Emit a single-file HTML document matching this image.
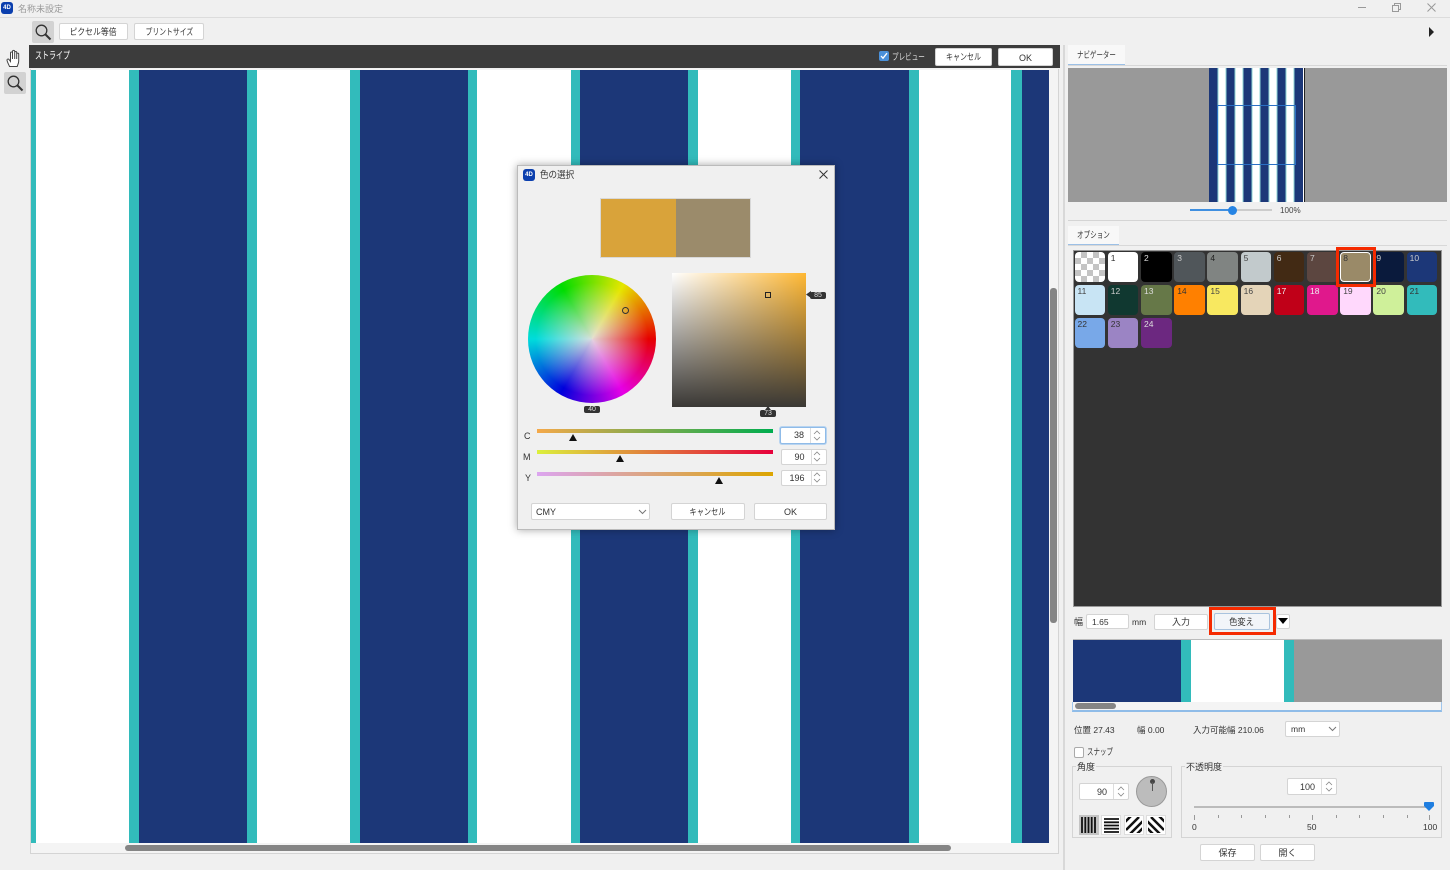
<!DOCTYPE html>
<html lang="ja"><head><meta charset="utf-8"><title>名称未設定</title>
<style>
html,body{margin:0;padding:0;width:1450px;height:870px;overflow:hidden;background:#f0f0f0}
body{position:relative;font-family:"Liberation Sans","Noto Sans CJK JP",sans-serif;font-size:9px;color:#333;filter:blur(.3px)}
div,span,svg{position:absolute;box-sizing:border-box}
.t{white-space:nowrap;line-height:12px;height:12px}
.l{transform-origin:0 50%}
.k{position:static;display:inline-block}
.b{background:#fff;border:1px solid #d4d4d4;border-radius:2px;text-align:center;white-space:nowrap;color:#333}
.s{width:30.5px;height:30px;border-radius:4px;font-size:8.5px;line-height:11px;padding:1px 0 0 3px}
.tick{width:1px;height:2.5px;background:#999;top:815px}
.arr{right:0;top:0;bottom:0;width:15px;border-left:1px solid #ddd}
</style></head><body>

<!-- title bar -->
<div style="left:0;top:17px;width:1450px;height:1px;background:#dcdcdc"></div>
<div style="left:1px;top:2px;width:12px;height:12px;border-radius:3px;background:#0b3fae"></div>
<div class="t" style="left:2px;top:2px;width:10px;text-align:center;font-size:6px;color:#fff;font-weight:bold">4D</div>
<div class="t" style="left:18px;top:3px;font-size:9px;color:#999">名称未設定</div>
<div style="left:1358px;top:7px;width:8px;height:1px;background:#999"></div>
<svg style="left:1392px;top:3px" width="9" height="9" viewBox="0 0 9 9" fill="none" stroke="#999"><path d="M.5 2.500h6v6h-6zM2.500 2.500v-2h6v6h-2"/></svg>
<svg style="left:1427px;top:3px" width="9" height="9" viewBox="0 0 9 9" fill="none" stroke="#999"><path d="M.5.5l8 8M8.500.5l-8 8"/></svg>

<!-- toolbar -->
<div style="left:32px;top:21px;width:22px;height:22px;background:#d2d2d2;border-radius:2px"></div>
<svg style="left:34px;top:23px" width="18" height="18" viewBox="0 0 18 18" fill="none" stroke="#333"><circle cx="7.500" cy="7.500" r="5.300" stroke-width="1.300"/><path d="M11.500 11.500l5 5" stroke-width="2"/></svg>
<div class="b" style="left:59px;top:23px;width:69px;height:17px;line-height:16px;font-size:9px"><span class="k" style="transform:scaleX(.87)">ピクセル等倍</span></div>
<div class="b" style="left:134px;top:23px;width:70px;height:17px;line-height:16px;font-size:9px"><span class="k" style="transform:scaleX(.76)">プリントサイズ</span></div>
<svg style="left:1428px;top:26px" width="7" height="12" viewBox="0 0 7 12"><path d="M1 1l5 5-5 5z" fill="#222"/></svg>

<!-- left tools -->
<svg style="left:6px;top:49px" width="17" height="19" viewBox="0 0 17 19" fill="#fff" stroke="#444" stroke-width="1"><path d="M3.500 17.500C2.500 15 1 12.500 1 11c0-1 1.300-1.300 2-.5l1.500 2V4c0-1.300 2-1.300 2 0V2.500c0-1.500 2.200-1.500 2.200 0V3.500c0-1.300 2-1.300 2 0V5c0-1.200 2-1.200 2 0v7c0 2.500-1 3.500-1.500 5.500zM6.500 4v6M8.700 3.500V10M10.700 4V10"/></svg>
<div style="left:4px;top:72px;width:22px;height:22px;background:#d2d2d2;border-radius:2px"></div>
<svg style="left:6px;top:74px" width="18" height="18" viewBox="0 0 18 18" fill="none" stroke="#333"><circle cx="7.500" cy="7.500" r="5.300" stroke-width="1.300"/><path d="M11.500 11.500l5 5" stroke-width="2"/></svg>

<!-- editor header -->
<div style="left:29px;top:45px;width:1031px;height:23px;background:#3c3c3c"></div>
<div class="t l" style="left:35px;top:51px;color:#fff;font-size:10px;transform:scaleX(.7)">ストライプ</div>
<div style="left:879px;top:51px;width:10px;height:10px;background:#4a90d9;border-radius:2px"></div>
<svg style="left:880px;top:52px" width="8" height="8" viewBox="0 0 8 8" fill="none" stroke="#fff" stroke-width="1.300"><path d="M1 4l2 2.200L7 1.200"/></svg>
<div class="t l" style="left:892px;top:51px;color:#ddd;font-size:9px;transform:scaleX(.73)">プレビュー</div>
<div class="b" style="left:935px;top:48px;width:57px;height:18px;line-height:17px;font-size:9px"><span class="k" style="transform:scaleX(.78)">キャンセル</span></div>
<div class="b" style="left:998px;top:48px;width:55px;height:18px;line-height:18px;font-size:9px">OK</div>

<!-- canvas -->
<div style="left:30px;top:69px;width:1029px;height:785px;border:1px solid #d4d4d4;border-top:0;background:#f4f4f4"></div>
<div style="left:31px;top:70px;width:1018px;height:773px;background:linear-gradient(to right,#32bbbb 0 5px,#fff 5px 98px,#32bbbb 98px 108px,#1c3778 108px 216px,#32bbbb 216px 226px,#fff 226px 319px,#32bbbb 319px 329px,#1c3778 329px 437px,#32bbbb 437px 446px,#fff 446px 540px,#32bbbb 540px 549px,#1c3778 549px 657px,#32bbbb 657px 667px,#fff 667px 760px,#32bbbb 760px 769px,#1c3778 769px 878px,#32bbbb 878px 888px,#fff 888px 980px,#32bbbb 980px 991px,#1c3778 991px 1018px)"></div>
<div style="left:125px;top:845px;width:826px;height:6px;background:#858585;border-radius:3px"></div>
<div style="left:1050px;top:288px;width:7px;height:335px;background:#858585;border-radius:3px"></div>

<!-- divider -->
<div style="left:1063px;top:45px;width:2px;height:825px;background:#d8d8d8"></div>

<!-- navigator -->
<div style="left:1068px;top:45px;width:57px;height:20px;background:#f8f8f8;border-bottom:1px solid #9cc0e6"></div>
<div class="t l" style="left:1077px;top:49px;font-size:9px;transform:scaleX(.72)">ナビゲーター</div>
<div style="left:1068px;top:65px;width:379px;height:1px;background:#d8d8d8"></div>
<div style="left:1068px;top:68px;width:379px;height:134px;background:#999"></div>
<div style="left:1209px;top:68px;width:96px;height:134px;background:linear-gradient(to right,#1c3778 0 8.500px,#8ed6d6 8.500px 9.500px,#fff 9.500px 16.500px,#8ed6d6 16.500px 17.500px,#1c3778 17.500px 25.500px,#8ed6d6 25.500px 26.500px,#fff 26.500px 33.500px,#8ed6d6 33.500px 34.500px,#1c3778 34.500px 42.500px,#8ed6d6 42.500px 43.500px,#fff 43.500px 50.500px,#8ed6d6 50.500px 51.500px,#1c3778 51.500px 59.500px,#8ed6d6 59.500px 60.500px,#fff 60.500px 67.500px,#8ed6d6 67.500px 68.500px,#1c3778 68.500px 76.500px,#8ed6d6 76.500px 77.500px,#fff 77.500px 84.500px,#8ed6d6 84.500px 85.500px,#1c3778 85.500px 94px,#fff 94px 95px,#222 95px 96px)"></div>
<div style="left:1217px;top:105px;width:79px;height:60px;border:1.300px solid #2a70c4"></div>
<div style="left:1190px;top:209px;width:82px;height:2px;background:#ccc"></div>
<div style="left:1190px;top:209px;width:42px;height:2px;background:#3f8fe0"></div>
<div style="left:1228px;top:206px;width:9px;height:9px;border-radius:50%;background:#2684e4"></div>
<div class="t l" style="left:1280px;top:204px;font-size:8.500px;color:#444;transform:scaleX(.95)">100%</div>

<!-- options -->
<div style="left:1068px;top:220px;width:379px;height:1px;background:#d4d4d4"></div>
<div style="left:1068px;top:226px;width:51px;height:19px;background:#f8f8f8;border-bottom:1px solid #9cc0e6"></div>
<div class="t l" style="left:1077px;top:229px;font-size:9px;transform:scaleX(.73)">オプション</div>
<div style="left:1068px;top:245px;width:379px;height:1px;background:#d8d8d8"></div>
<div style="left:1073px;top:250px;width:369px;height:357px;background:#333;border:1px solid #999"></div>

<div class="s" style="left:1074.500px;top:251.500px;background:conic-gradient(#c4c4c4 25%,#fff 25% 50%,#c4c4c4 50% 75%,#fff 75%) 0 0/12px 12px"></div>
<div class="s" style="left:1107.800px;top:251.500px;background:#fff;color:#333">1</div>
<div class="s" style="left:1141px;top:251.500px;background:#000;color:#ddd">2</div>
<div class="s" style="left:1174.200px;top:251.500px;background:#50565a;color:#ccc">3</div>
<div class="s" style="left:1207.400px;top:251.500px;background:#808482;color:#222">4</div>
<div class="s" style="left:1240.600px;top:251.500px;background:#c2cacc;color:#444">5</div>
<div class="s" style="left:1273.800px;top:251.500px;background:#422a14;color:#ccc">6</div>
<div class="s" style="left:1307px;top:251.500px;background:#5c4640;color:#ccc">7</div>
<div class="s" style="left:1340.200px;top:251.500px;background:#9a8a68;color:#333;border:1px solid #fff;padding:0 0 0 2px">8</div>
<div class="s" style="left:1373.400px;top:251.500px;background:#0a1a3c;color:#ccc">9</div>
<div class="s" style="left:1406.600px;top:251.500px;background:#1c3778;color:#ccc">10</div>

<div class="s" style="left:1074.500px;top:285px;background:#c8e4f4;color:#444">11</div>
<div class="s" style="left:1107.800px;top:285px;background:#103830;color:#ccc">12</div>
<div class="s" style="left:1141px;top:285px;background:#667848;color:#ddd">13</div>
<div class="s" style="left:1174.200px;top:285px;background:#ff8000;color:#333">14</div>
<div class="s" style="left:1207.400px;top:285px;background:#f8e860;color:#444">15</div>
<div class="s" style="left:1240.600px;top:285px;background:#e4d4b8;color:#444">16</div>
<div class="s" style="left:1273.800px;top:285px;background:#c00018;color:#eee">17</div>
<div class="s" style="left:1307px;top:285px;background:#e0188c;color:#eee">18</div>
<div class="s" style="left:1340.200px;top:285px;background:#ffd8fc;color:#444">19</div>
<div class="s" style="left:1373.400px;top:285px;background:#cff09a;color:#444">20</div>
<div class="s" style="left:1406.600px;top:285px;background:#32bbbb;color:#333">21</div>

<div class="s" style="left:1074.500px;top:318px;background:#78a8e8;color:#333">22</div>
<div class="s" style="left:1107.800px;top:318px;background:#9b84c4;color:#333">23</div>
<div class="s" style="left:1141px;top:318px;background:#6c2880;color:#ddd">24</div>

<div style="left:1336px;top:247px;width:40px;height:40px;border:3px solid #f52a00"></div>

<!-- width row -->
<div class="t" style="left:1074px;top:616px;font-size:9px">幅</div>
<div class="b" style="left:1086px;top:614px;width:43px;height:15px;line-height:14px;text-align:left;padding-left:5px;font-size:8.500px">1.65</div>
<div class="t" style="left:1132px;top:616px;font-size:8.500px">mm</div>
<div class="b" style="left:1154px;top:614px;width:54px;height:16px;line-height:15px;font-size:9px">入力</div>
<div style="left:1209px;top:607px;width:67px;height:28px;border:3px solid #f52a00"></div>
<div class="b" style="left:1214px;top:613px;width:56px;height:17px;line-height:16px;font-size:9px;background:#f2f5f9;border-color:#a9c3de"><span class="k" style="transform:scaleX(.92)">色変え</span></div>
<div class="b" style="left:1276px;top:614px;width:14px;height:15px"></div>
<svg style="left:1278px;top:618px" width="10" height="7" viewBox="0 0 10 7"><path d="M0 0h10L5 6z" fill="#000"/></svg>

<!-- strip preview -->
<div style="left:1073px;top:639px;width:369px;height:63px;background:linear-gradient(to right,#1c3778 0 108px,#32bbbb 108px 118px,#fff 118px 211px,#32bbbb 211px 221px,#999 221px);border-top:1px solid #bbb"></div>
<div style="left:1072px;top:702px;width:370px;height:10px;background:#f4f4f4;border:1px solid #a0c6ec;border-top:0;border-bottom:2px solid #8fbce8"></div>
<div style="left:1075px;top:703px;width:41px;height:6px;background:#858585;border-radius:3px"></div>

<div class="t" style="left:1074px;top:724px;font-size:8.500px">位置 27.43</div>
<div class="t" style="left:1137px;top:724px;font-size:8.500px">幅 0.00</div>
<div class="t" style="left:1193px;top:724px;font-size:8.500px">入力可能幅 210.06</div>
<div class="b" style="left:1285px;top:721px;width:55px;height:16px;line-height:15px;text-align:left;padding-left:5px;font-size:8.500px">mm</div>
<svg style="left:1328px;top:726px" width="9" height="6" viewBox="0 0 9 6" fill="none" stroke="#777"><path d="M1 1l3.500 3.500L8 1"/></svg>

<!-- snap -->
<div style="left:1073.500px;top:747px;width:10.500px;height:10.500px;background:#fff;border:1px solid #aaa;border-radius:2px"></div>
<div class="t l" style="left:1087px;top:746px;font-size:9px;transform:scaleX(.72)">スナップ</div>

<!-- angle group -->
<div style="left:1072px;top:766px;width:100px;height:72px;border:1px solid #d4d4d4"></div>
<div class="t" style="left:1076px;top:761px;font-size:9px;background:#f0f0f0;padding:0 1px">角度</div>
<div class="b" style="left:1079px;top:783px;width:50px;height:17px;line-height:16px;text-align:right;padding-right:21px;font-size:9px">90<div class="arr"></div></div>
<svg style="left:1116px;top:786px" width="10" height="11" viewBox="0 0 10 11" fill="none" stroke="#888" stroke-width=".8"><path d="M2 4l3-3 3 3M2 7l3 3 3-3"/></svg>
<div style="left:1136px;top:775.500px;width:31px;height:31px;border-radius:50%;background:#bcbcbc;border:1px solid #999"></div>
<div style="left:1149.500px;top:779px;width:5px;height:5px;border-radius:50%;background:#444"></div>
<div style="left:1151.500px;top:782px;width:1px;height:9px;background:#555"></div>

<div style="left:1078.500px;top:815px;width:20px;height:20px;background:#c4c4c4"></div>
<svg style="left:1081px;top:817px" width="15" height="16" viewBox="0 0 15 16"><path d="M1 0v16M4.300 0v16M7.500 0v16M10.700 0v16M14 0v16" stroke="#111" stroke-width="1.800"/></svg>
<div style="left:1101px;top:815px;width:20px;height:20px;background:#fff;border:1px solid #ddd"></div>
<svg style="left:1103.500px;top:817.500px" width="15" height="15" viewBox="0 0 15 15"><path d="M0 1h15M0 4.300h15M0 7.500h15M0 10.700h15M0 14h15" stroke="#111" stroke-width="1.800"/></svg>
<div style="left:1124px;top:815px;width:20px;height:20px;background:#fff;border:1px solid #ddd"></div>
<svg style="left:1126px;top:817px" width="16" height="16" viewBox="0 0 16 16"><path d="M-2 6L6-2M0 13L13 0M3 18L18 3M10 18l8-8" stroke="#111" stroke-width="2.500"/></svg>
<div style="left:1146px;top:815px;width:20px;height:20px;background:#fff;border:1px solid #ddd"></div>
<svg style="left:1148px;top:817px" width="16" height="16" viewBox="0 0 16 16"><path d="M10-2l8 8M3 0l13 13M-2 3l15 15M-2 10l8 8" stroke="#111" stroke-width="2.500"/></svg>

<!-- opacity group -->
<div style="left:1181px;top:766px;width:261px;height:72px;border:1px solid #d4d4d4"></div>
<div class="t" style="left:1185px;top:761px;font-size:9px;background:#f0f0f0;padding:0 1px">不透明度</div>
<div class="b" style="left:1287px;top:778px;width:50px;height:17px;line-height:16px;text-align:right;padding-right:21px;font-size:9px">100<div class="arr"></div></div>
<svg style="left:1324px;top:781px" width="10" height="11" viewBox="0 0 10 11" fill="none" stroke="#888" stroke-width=".8"><path d="M2 4l3-3 3 3M2 7l3 3 3-3"/></svg>
<div style="left:1194px;top:806px;width:236px;height:1.500px;background:#bbb"></div>
<svg style="left:1424px;top:802px" width="10" height="9" viewBox="0 0 10 9"><path d="M1 0h8a1 1 0 0 1 1 1v3L5 9 0 4V1a1 1 0 0 1 1-1z" fill="#1f7ee0"/></svg>
<div class="tick" style="left:1194px;height:5px"></div><div class="tick" style="left:1217.500px"></div><div class="tick" style="left:1241px"></div><div class="tick" style="left:1265px"></div><div class="tick" style="left:1288.500px"></div><div class="tick" style="left:1312px;height:5px"></div><div class="tick" style="left:1335.500px"></div><div class="tick" style="left:1359px"></div><div class="tick" style="left:1383px"></div><div class="tick" style="left:1406.500px"></div><div class="tick" style="left:1429px;height:5px"></div>
<div class="t" style="left:1192px;top:821px;font-size:8.500px">0</div>
<div class="t" style="left:1307px;top:821px;font-size:8.500px">50</div>
<div class="t" style="left:1423px;top:821px;font-size:8.500px">100</div>

<div class="b" style="left:1200px;top:844px;width:55px;height:17px;line-height:16px;font-size:9px">保存</div>
<div class="b" style="left:1260px;top:844px;width:55px;height:17px;line-height:16px;font-size:9px">開く</div>

<!-- dialog -->
<div style="left:517px;top:165px;width:318px;height:365px;background:#f0f0f0;border:1px solid #bbb;box-shadow:0 0 8px rgba(0,0,0,.35)"></div>
<div style="left:523px;top:169px;width:12px;height:12px;border-radius:3px;background:#0b3fae"></div>
<div class="t" style="left:523px;top:169px;width:12px;text-align:center;font-size:6px;color:#fff;font-weight:bold">4D</div>
<div class="t l" style="left:540px;top:170px;font-size:9.500px;transform:scaleX(.9)">色の選択</div>
<svg style="left:819px;top:170px" width="9" height="9" viewBox="0 0 9 9" fill="none" stroke="#333" stroke-width="1"><path d="M.5.5l8 8M8.500.5l-8 8"/></svg>

<div style="left:600px;top:198px;width:151px;height:60px;border:1px solid #d8d8d8;background:linear-gradient(to right,#d9a33a 0 75px,#9b8b6b 75px)"></div>

<div style="left:527.500px;top:274.500px;width:128px;height:128px;border-radius:50%;background:radial-gradient(closest-side,rgba(228,224,224,.95),rgba(228,224,224,0) 88%),conic-gradient(from 90deg,#e60000,#e600e6 60deg,#0000dc 120deg,#00dcdc 180deg,#00dc00 240deg,#e6e600 300deg,#e60000)"></div>
<div style="left:622px;top:307px;width:7px;height:7px;border-radius:50%;border:1px solid #333"></div>
<div style="left:584px;top:405.500px;width:16px;height:7px;background:#333;border-radius:2px"></div>
<div class="t" style="left:584px;top:404px;width:16px;text-align:center;color:#ddd;font-size:7px">40</div>

<div style="left:672px;top:272.500px;width:134px;height:134px;background:linear-gradient(to bottom,rgba(58,56,53,0),#3a3835),linear-gradient(to right,#fff,#ffb833)"></div>
<div style="left:765px;top:291.500px;width:6px;height:6px;border:1px solid #222"></div>
<svg style="left:806px;top:291px" width="5" height="7" viewBox="0 0 5 7"><path d="M5 0v7L0 3.500z" fill="#333"/></svg>
<div style="left:810px;top:291.500px;width:16px;height:7px;background:#333;border-radius:2px"></div>
<div class="t" style="left:810px;top:290px;width:16px;text-align:center;color:#ddd;font-size:7px">85</div>
<svg style="left:765px;top:406px" width="6" height="4" viewBox="0 0 6 4"><path d="M0 4h6L3 0z" fill="#333"/></svg>
<div style="left:760px;top:409.500px;width:16px;height:7px;background:#333;border-radius:2px"></div>
<div class="t" style="left:760px;top:408px;width:16px;text-align:center;color:#ddd;font-size:7px">73</div>

<div class="t" style="left:524px;top:430px;font-size:9px">C</div>
<div class="t" style="left:523px;top:451px;font-size:9px">M</div>
<div class="t" style="left:525px;top:472px;font-size:9px">Y</div>
<div style="left:537px;top:429px;width:236px;height:4px;background:linear-gradient(to right,#f5a94a,#00ad4f)"></div>
<div style="left:537px;top:450px;width:236px;height:4px;background:linear-gradient(to right,#dcf03c,#e6003c)"></div>
<div style="left:537px;top:472px;width:236px;height:4px;background:linear-gradient(to right,#dca5f0,#dca500)"></div>
<svg style="left:568px;top:434px" width="10" height="7" viewBox="0 0 10 7"><path d="M5 0l4 7H1z" fill="#111"/></svg>
<svg style="left:615px;top:455px" width="10" height="7" viewBox="0 0 10 7"><path d="M5 0l4 7H1z" fill="#111"/></svg>
<svg style="left:714px;top:477px" width="10" height="7" viewBox="0 0 10 7"><path d="M5 0l4 7H1z" fill="#111"/></svg>

<div class="b" style="left:780px;top:427px;width:46px;height:17px;line-height:15px;text-align:right;padding-right:21px;font-size:9px;border-color:#8fbbe8;box-shadow:0 0 0 1px #b8d4f0">38<div class="arr"></div></div>
<div class="b" style="left:780.500px;top:448.500px;width:46px;height:16px;line-height:15px;text-align:right;padding-right:21px;font-size:9px">90<div class="arr"></div></div>
<div class="b" style="left:780.500px;top:469.500px;width:46px;height:16px;line-height:15px;text-align:right;padding-right:21px;font-size:9px">196<div class="arr"></div></div>
<svg style="left:812px;top:430px" width="10" height="11" viewBox="0 0 10 11" fill="none" stroke="#888" stroke-width=".8"><path d="M2 4l3-3 3 3M2 7l3 3 3-3"/></svg>
<svg style="left:812px;top:451px" width="10" height="11" viewBox="0 0 10 11" fill="none" stroke="#888" stroke-width=".8"><path d="M2 4l3-3 3 3M2 7l3 3 3-3"/></svg>
<svg style="left:812px;top:472px" width="10" height="11" viewBox="0 0 10 11" fill="none" stroke="#888" stroke-width=".8"><path d="M2 4l3-3 3 3M2 7l3 3 3-3"/></svg>

<div class="b" style="left:531px;top:503px;width:119px;height:17px;line-height:16px;text-align:left;padding-left:4px;font-size:9px">CMY</div>
<svg style="left:638px;top:509px" width="9" height="6" viewBox="0 0 9 6" fill="none" stroke="#777"><path d="M1 1l3.500 3.500L8 1"/></svg>
<div class="b" style="left:671px;top:503px;width:74px;height:17px;line-height:16px;font-size:9px"><span class="k" style="transform:scaleX(.8)">キャンセル</span></div>
<div class="b" style="left:754px;top:503px;width:73px;height:17px;line-height:16px;font-size:9px">OK</div>

</body></html>
